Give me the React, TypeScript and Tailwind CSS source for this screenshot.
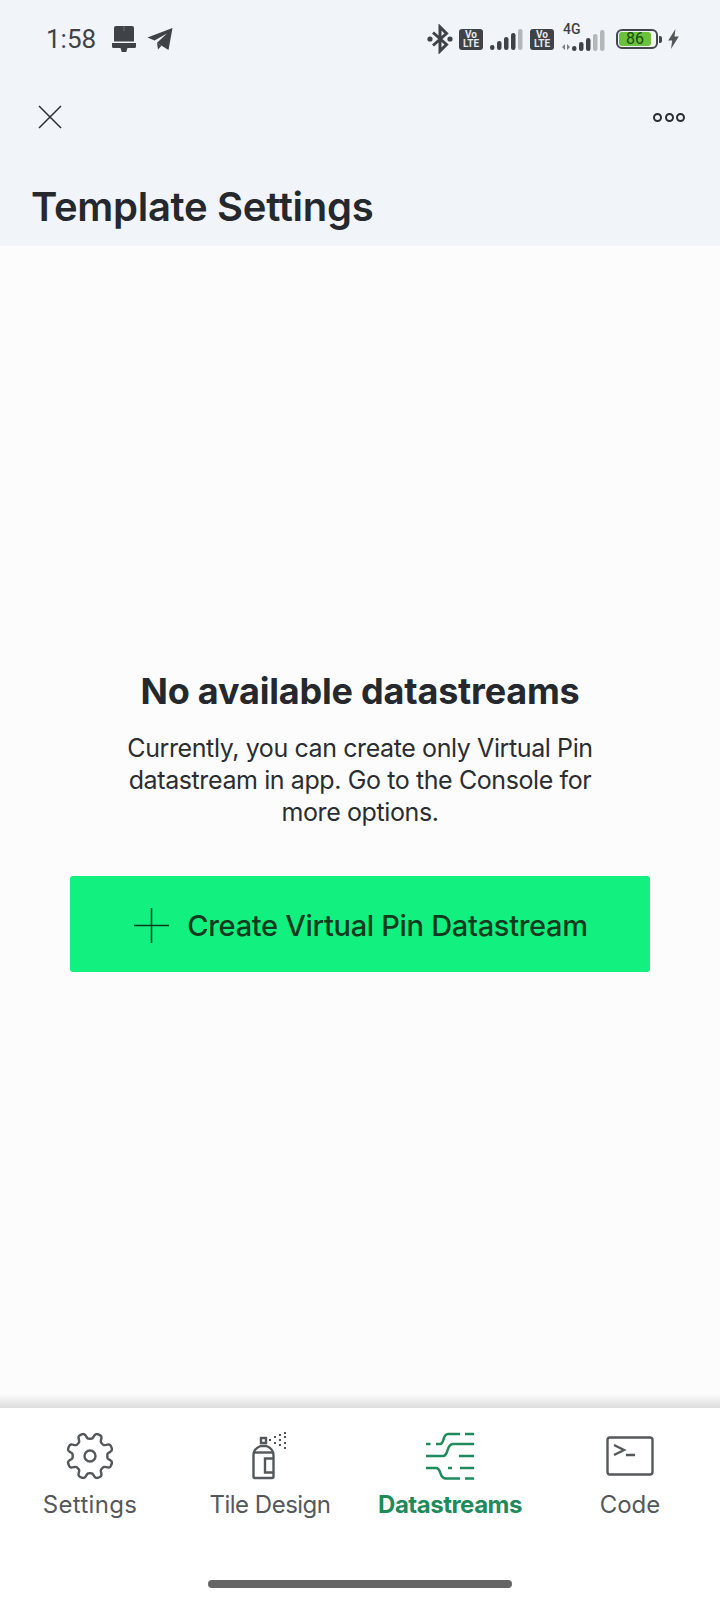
const font = "font-['Inter','Liberation_Sans',sans-serif]";

function Bars({ filled, x = 0 }: { filled: number; x?: number }) {
  const heights = [5, 9, 13, 17, 21];
  return (
    <>
      {heights.map((h, i) => (
        <rect
          key={i}
          x={x + i * 7}
          y={22 - h}
          width="4.500"
          height={h}
          rx="2.200"
          fill={i < filled ? "#3f4246" : "#b4b7ba"}
        />
      ))}
    </>
  );
}

function Volte() {
  return (
    <div className="flex h-[21px] w-[24px] flex-col items-center justify-center rounded-[3px] bg-[#3f4246] font-['Roboto',sans-serif] text-[10px] leading-[9.500px] font-bold text-[#e6e8ec]">
      <span>Vo</span>
      <span>LTE</span>
    </div>
  );
}

function StatusBar() {
  return (
    <div className="flex h-[78px] items-center justify-between pr-[41px] pl-[46px]">
      <div className="flex items-center">
        <span className="w-[50px] font-['Roboto',sans-serif] text-[26px] leading-none text-[#3f4246]">1:58</span>
        <svg className="ml-[16px]" width="24" height="26" viewBox="0 0 24 26" fill="#3f4246">
          <path d="M2 2a2 2 0 0 1 2-2h16a2 2 0 0 1 2 2v13.500H2z" />
          <path d="M0 17h24v3.500a1.500 1.500 0 0 1-1.500 1.500h-21A1.500 1.500 0 0 1 0 20.500z" />
          <path d="M8.500 22h7l-1 3a2.500 2.500 0 0 1-5 0z" />
          <path d="M11.500 0h1v5h-1z" fill="#6b6e72" />
        </svg>
        <svg className="ml-[11px]" width="26" height="24" viewBox="0 0 26 24" fill="#3f4246">
          <path d="M25.500 1 21.500 23 13.500 18 10 15.800 20 6.500 7.500 13.600 0.500 10.500z" />
          <path d="M10 15.800 14.500 18.700 11 22.500z" />
        </svg>
      </div>
      <div className="flex items-center">
        <svg width="26" height="30" viewBox="0 0 26 30" fill="none">
          <path d="M6 8.500 19.500 20.500 13 27V3L19.500 9.500 6 21.500" stroke="#3f4246" strokeWidth="3" />
          <circle cx="3" cy="15" r="2.600" fill="#3f4246" />
          <circle cx="23" cy="15" r="2.600" fill="#3f4246" />
        </svg>
        <div className="ml-[6px]">
          <Volte />
        </div>
        <svg className="ml-[7px]" width="33" height="22" viewBox="0 0 33 22">
          <Bars filled={4} />
        </svg>
        <div className="ml-[7px]">
          <Volte />
        </div>
        <div className="relative ml-[8px] h-[24px] w-[43px]">
          <span className="absolute top-[-5px] left-[1px] font-['Roboto',sans-serif] text-[14px] leading-[14px] font-medium text-[#3f4246]">4G</span>
          <svg className="absolute bottom-0 left-0" width="43" height="22" viewBox="0 0 43 22">
            <path d="M3 15v6l-3-3zM5 15l3 3-3 3z" fill="#7d8083" />
            <Bars filled={3} x={10} />
          </svg>
        </div>
        <div className="ml-[11px] flex h-[20px] w-[42px] items-center rounded-[6px] border-2 border-[#45484b] p-[1px]">
          <div className="flex h-full w-[32px] items-center justify-center rounded-[3px] bg-[#6cc13a] font-['Roboto',sans-serif] text-[16px] leading-none text-[#164d0c]">
            86
          </div>
        </div>
        <div className="ml-[1px] h-[7px] w-[3px] rounded-r-[2px] bg-[#45484b]" />
        <svg className="ml-[6px]" width="11" height="20" viewBox="0 0 11 20" fill="#54575a">
          <path d="M7.500 0 0.200 11.500h4L3 20 10.800 7.500H6.500z" />
        </svg>
      </div>
    </div>
  );
}

function Header() {
  return (
    <div className="h-[246px] bg-[#f1f4f8]">
      <StatusBar />
      <div className="flex h-[78px] items-center justify-between pr-[35px] pl-[38px]">
        <svg width="24" height="24" viewBox="0 0 24 24" fill="none" stroke="#2a2d31" strokeWidth="1.500">
          <path d="M1 1l22 22M23 1 1 23" />
        </svg>
        <div className="flex gap-[2.500px]">
          <span className="h-[9px] w-[9px] rounded-full border-2 border-[#2a2d31]" />
          <span className="h-[9px] w-[9px] rounded-full border-2 border-[#2a2d31]" />
          <span className="h-[9px] w-[9px] rounded-full border-2 border-[#2a2d31]" />
        </div>
      </div>
      <h1 className={`${font} pt-[27px] pl-[31px] text-[40px] leading-[48px] font-semibold tracking-[-0.3px] text-[#25282c]`}>
        Template Settings
      </h1>
    </div>
  );
}

function EmptyState() {
  return (
    <div className="flex flex-1 flex-col items-center bg-[#fcfcfc] pt-[423px]">
      <h2 className={`${font} text-[36px] leading-[44px] font-bold tracking-[-0.2px] text-[#25282c]`}>No available datastreams</h2>
      <p className={`${font} mt-[19px] w-[480px] text-center text-[25px] leading-[32px] tracking-[-0.4px] text-[#2a2d31]`}>
        Currently, you can create only Virtual Pin datastream in app. Go to the Console for more options.
      </p>
      <button className="mt-[48px] flex h-[96px] w-[580px] items-center justify-center rounded-[3px] bg-[#12f07f] pt-[2px]">
        <svg className="ml-[2px]" width="35" height="35" viewBox="0 0 35 35" stroke="#0e3b20" strokeWidth="1.500">
          <path d="M17.500 0v35M0 17.500h35" />
        </svg>
        <span className={`${font} ml-[18px] pt-[2px] text-[29px] font-medium tracking-[-0.3px] text-[#0e3b20]`}>
          Create Virtual Pin Datastream
        </span>
      </button>
    </div>
  );
}

function GearIcon() {
  // eight flat teeth around the hub, with a notch on top
  const pts: string[] = [];
  for (let i = 0; i < 240; i++) {
    const a = (i / 240) * Math.PI * 2;
    const r = 20.2 - 2.9 * (Math.tanh(2.2 * Math.cos(8 * a)) / Math.tanh(2.2));
    pts.push(`${(24 + r * Math.sin(a)).toFixed(2)},${(24 - r * Math.cos(a)).toFixed(2)}`);
  }
  return (
    <svg width="48" height="48" viewBox="0 0 48 48" fill="none" stroke="#55585b" strokeWidth="2.400">
      <polygon points={pts.join(" ")} strokeLinejoin="round" />
      <circle cx="24" cy="24" r="5.500" />
    </svg>
  );
}

function SprayIcon() {
  return (
    <svg width="36" height="48" viewBox="0 0 36 48" fill="none" stroke="#55585b" strokeWidth="2.400">
      <rect x="9" y="6" width="5" height="5" />
      <path
        d="M8.500 14C5 15.500 1.500 18.500 1.500 23v21.500a1.500 1.500 0 0 0 1.500 1.500h17a1.500 1.500 0 0 0 1.500-1.500V23c0-4.500-3.500-7.500-7-9z"
        strokeLinejoin="round"
      />
      <path d="M2 20.500h19" />
      <path d="M21 26.500h-8v14h8" />
      <g fill="#55585b" stroke="none">
        <rect x="17" y="7" width="2" height="2" />
        <rect x="22" y="4" width="2" height="2" />
        <rect x="22" y="10" width="2" height="2" />
        <rect x="27" y="2" width="2" height="2" />
        <rect x="27" y="7" width="2" height="2" />
        <rect x="27" y="12" width="2" height="2" />
        <rect x="32" y="0" width="2" height="2" />
        <rect x="32" y="4" width="2" height="2" />
        <rect x="32" y="10" width="2" height="2" />
        <rect x="32" y="15" width="2" height="2" />
      </g>
    </svg>
  );
}

function StreamsIcon() {
  return (
    <svg width="48" height="48" viewBox="0 0 48 48" fill="none" stroke="#1f8a5b" strokeWidth="2.500">
      <path d="M0 12h4.500M10 12h4c4.500 0 2.500-10 8-10h12M39 2h9" />
      <path d="M0 24h17c6 0 3-12 10-12h21M33 24h15" />
      <path d="M0 36h10c6 0 2.500 10.500 10 10.500h14M39 46.500h9M22 36h4M34 36h14" />
    </svg>
  );
}

function CodeIcon() {
  return (
    <svg width="48" height="40" viewBox="0 0 48 40" fill="none" stroke="#55585b" strokeWidth="2.400">
      <rect x="1.500" y="1.500" width="45" height="37" rx="2.500" />
      <path d="M8 9l10 5-10 5M20 19h9" />
    </svg>
  );
}

function NavItem({ label, labelClass, children }: { label: string; labelClass: string; children: React.ReactNode }) {
  return (
    <div className="flex w-[180px] flex-col items-center">
      <div className="flex h-[48px] items-center justify-center">{children}</div>
      <span className={`${font} mt-[9px] text-[24px] leading-[32px] ${labelClass}`}>{label}</span>
    </div>
  );
}

function BottomNav() {
  return (
    <div className="relative h-[192px] bg-white">
      <div className="absolute inset-x-0 top-[-14px] h-[14px] bg-gradient-to-b from-transparent to-[#dcdcdc]" />
      <div className="flex pt-[24px]">
        <NavItem label="Settings" labelClass="tracking-[0.3px] text-[#55585b]"><GearIcon /></NavItem>
        <NavItem label="Tile Design" labelClass="tracking-[-0.5px] text-[#55585b]"><SprayIcon /></NavItem>
        <NavItem label="Datastreams" labelClass="font-bold tracking-[-0.5px] text-[#1f8a5b]"><StreamsIcon /></NavItem>
        <NavItem label="Code" labelClass="text-[#55585b]"><CodeIcon /></NavItem>
      </div>
      <div className="mx-auto mt-[59px] h-[8px] w-[304px] rounded-full bg-[#666666]" />
    </div>
  );
}

export default function App() {
  return (
    <div className="flex h-[1600px] w-[720px] flex-col overflow-hidden bg-[#fcfcfc]">
      <Header />
      <EmptyState />
      <BottomNav />
    </div>
  );
}
